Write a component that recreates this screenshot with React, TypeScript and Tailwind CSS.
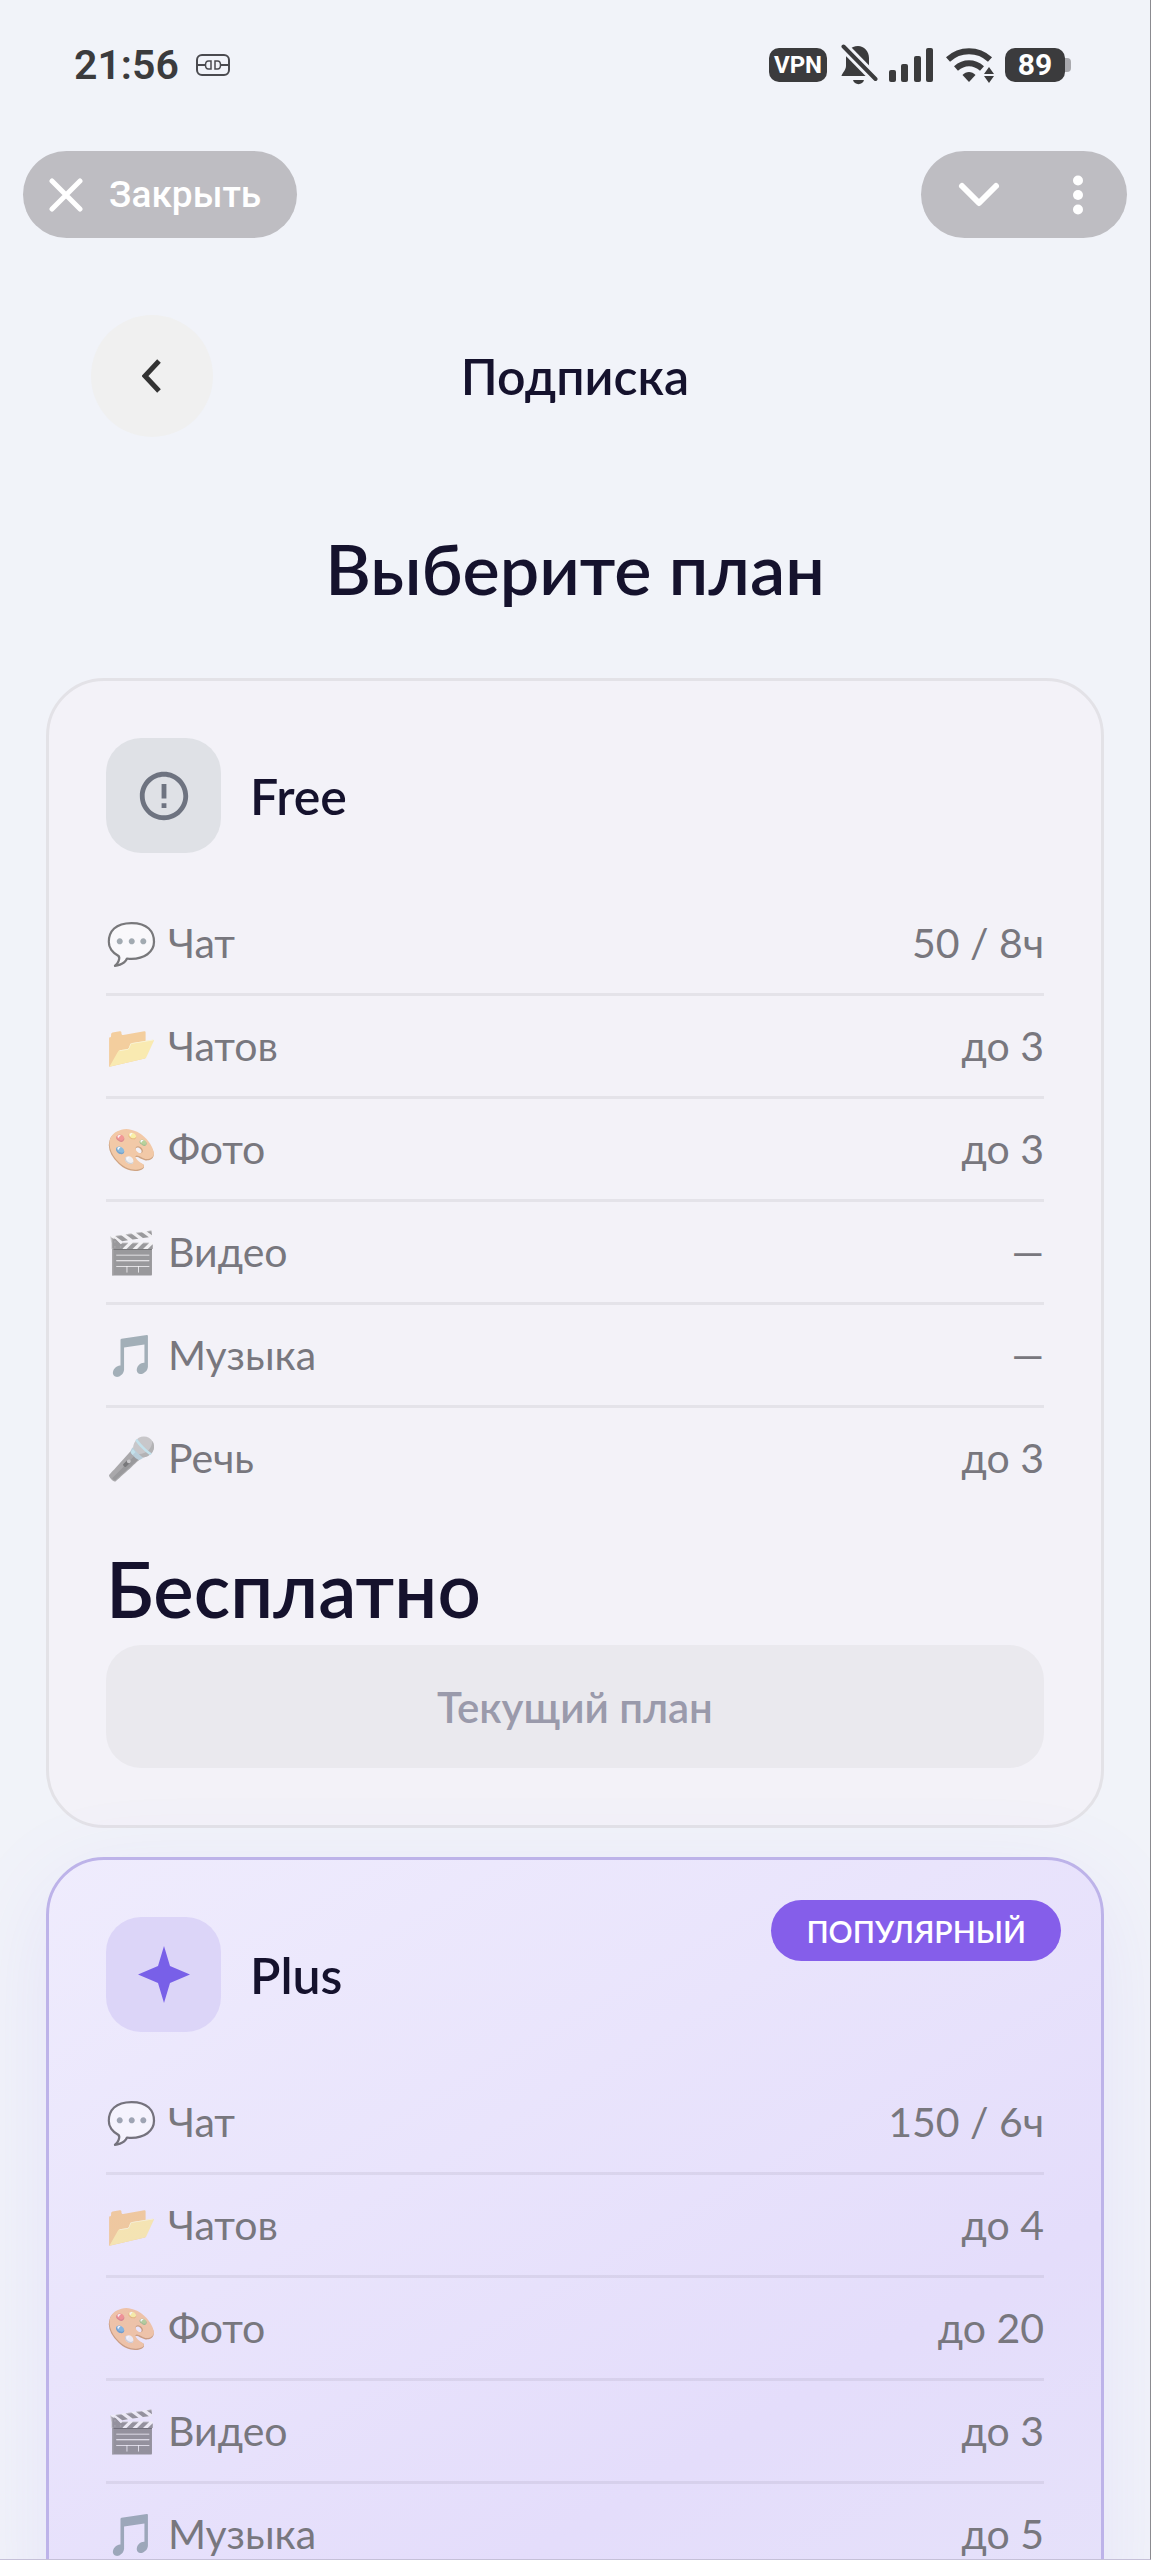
import type { ReactNode } from "react";
import { MdErrorOutline } from "react-icons/md";

type Feature = {
    emoji: string;
    label: string;
    value: string;
};

const freeFeatures: Feature[] = [
    { emoji: "💬", label: "Чат", value: "50 / 8ч" },
    { emoji: "📂", label: "Чатов", value: "до 3" },
    { emoji: "🎨", label: "Фото", value: "до 3" },
    { emoji: "🎬", label: "Видео", value: "—" },
    { emoji: "🎵", label: "Музыка", value: "—" },
    { emoji: "🎤", label: "Речь", value: "до 3" },
];

const plusFeatures: Feature[] = [
    { emoji: "💬", label: "Чат", value: "150 / 6ч" },
    { emoji: "📂", label: "Чатов", value: "до 4" },
    { emoji: "🎨", label: "Фото", value: "до 20" },
    { emoji: "🎬", label: "Видео", value: "до 3" },
    { emoji: "🎵", label: "Музыка", value: "до 5" },
];

function StatusBar() {
    return (
        <div className="flex h-[130px] items-center justify-between pl-[74px] pr-[79px] font-['Roboto',sans-serif] text-[#3b3b3d]">
            <div className="flex items-center gap-[17px]">
                <span className="text-[41px] leading-[48px] font-semibold">
                    21:56
                </span>
                <svg
                    width="34"
                    height="22"
                    viewBox="0 0 34 22"
                    fill="none"
                    stroke="#4a4a4f"
                    strokeWidth="2"
                >
                    <rect x="1" y="1" width="32" height="20" rx="5" />
                    <path d="M1 11H9M25 11H33" />
                    <path
                        d="M15 7H12.5C8.5 7 8.5 15 12.5 15H15ZM19 7V15H21.5C25.5 15 25.5 7 21.5 7Z"
                        strokeWidth="1.5"
                    />
                </svg>
            </div>
            <div className="flex items-center">
                <span className="flex h-[34px] w-[58px] items-center justify-center rounded-[10px] bg-[#3b3b3d] text-[24px] leading-[34px] font-bold text-white">
                    VPN
                </span>
                <svg
                    className="ml-[14px]"
                    width="38"
                    height="42"
                    viewBox="0 0 38 42"
                    fill="#3b3b3d"
                >
                    <path d="M17 2C23 2 28 7 28 14V21C28 25 30 29 32 32H0.5C0.5 30 5 26 5 22V14C5 7 10 2 17 2Z" />
                    <path d="M12 36H23C22 41.5 13 41.5 12 36Z" />
                    <path
                        d="M2.5 2.5L34.5 35"
                        stroke="#f1f3f9"
                        strokeWidth="10"
                    />
                    <path
                        d="M2.5 2.5L34.5 35"
                        stroke="#3b3b3d"
                        strokeWidth="4"
                        strokeLinecap="round"
                    />
                </svg>
                <svg
                    className="ml-[10px]"
                    width="44"
                    height="34"
                    viewBox="0 0 44 34"
                    fill="#3b3b3d"
                >
                    <rect x="0" y="22" width="7" height="12" rx="2" />
                    <rect x="12" y="16" width="7" height="18" rx="2" />
                    <rect x="25" y="8" width="7" height="26" rx="2" />
                    <rect x="37" y="0" width="7" height="34" rx="2" />
                </svg>
                <svg
                    className="ml-[13px]"
                    width="50"
                    height="36"
                    viewBox="0 0 50 36"
                    fill="none"
                    stroke="#3b3b3d"
                    strokeWidth="6"
                >
                    <path d="M2 12.5C14 1.5 32 1.5 44 12.5" />
                    <path d="M10 21.5C18 14.5 28 14.5 36 21.5" />
                    <path
                        d="M16.5 28C20 24 26 24 29.5 28L23 35Z"
                        fill="#3b3b3d"
                        stroke="none"
                    />
                    <path
                        d="M43 20L48 27H38ZM43 36L48 29H38Z"
                        fill="#3b3b3d"
                        stroke="none"
                    />
                </svg>
                <span className="ml-[9px] flex h-[34px] w-[60px] items-center justify-center rounded-[10px] bg-[#3b3b3d] text-[30px] leading-[34px] font-bold text-white">
                    89
                </span>
                <span className="h-[14px] w-[6px] rounded-r-[4px] bg-[#a9a9ae]" />
            </div>
        </div>
    );
}

function AppControls() {
    return (
        <div className="mt-[21px] flex justify-between px-[23px] text-white">
            <button className="flex h-[87px] items-center gap-[26px] rounded-full bg-[#bebdc2] pr-[36px] pl-[26px] font-['Roboto',sans-serif] text-[37px] leading-[44px] font-medium">
                <svg
                    width="34"
                    height="34"
                    viewBox="0 0 34 34"
                    fill="none"
                    stroke="currentColor"
                    strokeWidth="5"
                    strokeLinecap="round"
                >
                    <path d="M3 3L31 31M31 3L3 31" />
                </svg>
                Закрыть
            </button>
            <div className="flex h-[87px] w-[206px] items-center justify-between rounded-full bg-[#bebdc2] pr-[43px] pl-[36px]">
                <button aria-label="Свернуть">
                    <svg
                        width="44"
                        height="28"
                        viewBox="0 0 44 28"
                        fill="none"
                        stroke="currentColor"
                        strokeWidth="6"
                        strokeLinecap="round"
                        strokeLinejoin="round"
                    >
                        <path d="M5 5L22 22L39 5" />
                    </svg>
                </button>
                <button aria-label="Меню">
                    <svg
                        width="12"
                        height="40"
                        viewBox="0 0 12 40"
                        fill="currentColor"
                    >
                        <circle cx="6" cy="5.5" r="5" />
                        <circle cx="6" cy="20" r="5" />
                        <circle cx="6" cy="34.5" r="5" />
                    </svg>
                </button>
            </div>
        </div>
    );
}

function FeatureTable({ features }: { features: Feature[] }) {
    return (
        <table className="mt-[40px] w-full border-separate border-spacing-0 text-[41px] leading-[48px] text-[#78777e]">
            <tbody>
                {features.map((feature) => (
                    <tr key={feature.label} className="group">
                        <th
                            scope="row"
                            className="h-[103px] border-b-[3px] border-black/6 p-0 text-left font-normal group-last:h-[100px] group-last:border-b-0"
                        >
                            <span className="flex items-center gap-[11px]">
                                <span className="opacity-50">
                                    {feature.emoji}
                                </span>
                                {feature.label}
                            </span>
                        </th>
                        <td className="h-[103px] border-b-[3px] border-black/6 p-0 text-right group-last:h-[100px] group-last:border-b-0">
                            {feature.value}
                        </td>
                    </tr>
                ))}
            </tbody>
        </table>
    );
}

function PlanHeader({
    icon,
    iconClass,
    name,
}: {
    icon: ReactNode;
    iconClass: string;
    name: string;
}) {
    return (
        <div className="flex items-center gap-[29px]">
            <div
                className={`flex size-[115px] items-center justify-center rounded-[35px] ${iconClass}`}
            >
                {icon}
            </div>
            <h2 className="text-[50px] leading-[60px] font-semibold">{name}</h2>
        </div>
    );
}

export default function App() {
    return (
        <div className="h-screen overflow-hidden border-r border-b border-r-[#8b8b90] border-b-[#c5c0d8] bg-[#f1f3f9] font-['Lato',sans-serif] text-[#15122d]">
            <StatusBar />
            <AppControls />

            <header className="mt-[77px] grid grid-cols-[122px_1fr_122px] items-center px-[91px]">
                <button
                    aria-label="Назад"
                    className="flex size-[122px] items-center justify-center rounded-full bg-[#f0f0f0]"
                >
                    <svg
                        width="20"
                        height="34"
                        viewBox="0 0 20 34"
                        fill="none"
                        stroke="#333333"
                        strokeWidth="5"
                    >
                        <path d="M17 2L3 17L17 32" />
                    </svg>
                </button>
                <p className="text-center text-[50px] leading-[60px] font-semibold">
                    Подписка
                </p>
            </header>

            <h1 className="mt-[91px] mb-[70px] text-center text-[70px] leading-[80px] font-semibold">
                Выберите план
            </h1>

            <main className="flex flex-col gap-[29px] px-[46px]">
                <section className="rounded-[58px] border-[3px] border-[#e3e2e7] bg-[#f3f2f8] p-[57px]">
                    <PlanHeader
                        name="Free"
                        iconClass="bg-[#dfe1e6] text-[#6e7380]"
                        icon={<MdErrorOutline size={58} />}
                    />
                    <FeatureTable features={freeFeatures} />
                    <p className="mt-[36px] mb-[11px] text-[76px] leading-[90px] font-semibold">
                        Бесплатно
                    </p>
                    <button
                        disabled
                        className="h-[123px] w-full rounded-[35px] bg-[#eae9ee] text-[42px] leading-[50px] font-semibold text-[#9a9aab]"
                    >
                        Текущий план
                    </button>
                </section>

                <section className="relative rounded-[58px] border-[3px] border-[#bdb3e9] bg-linear-150 from-[#efecfd] via-[#e4ddfb] via-70% to-[#e6e2fa] p-[57px] shadow-[0_24px_96px_rgba(124,92,246,0.10)]">
                    <span className="absolute top-[40px] right-[40px] flex h-[61px] items-center rounded-full bg-[#855eea] px-[35px] text-[30px] leading-[36px] font-semibold text-white">
                        ПОПУЛЯРНЫЙ
                    </span>
                    <PlanHeader
                        name="Plus"
                        iconClass="bg-[#dcd5f8] text-[#7860e8]"
                        icon={
                            <svg
                                width="52"
                                height="57"
                                viewBox="0 0 52 57"
                                fill="currentColor"
                            >
                                <path d="M26 0L32 20L52 28.5L32 37L26 57L20 37L0 28.5L20 20Z" />
                            </svg>
                        }
                    />
                    <FeatureTable features={plusFeatures} />
                </section>
            </main>
        </div>
    );
}
